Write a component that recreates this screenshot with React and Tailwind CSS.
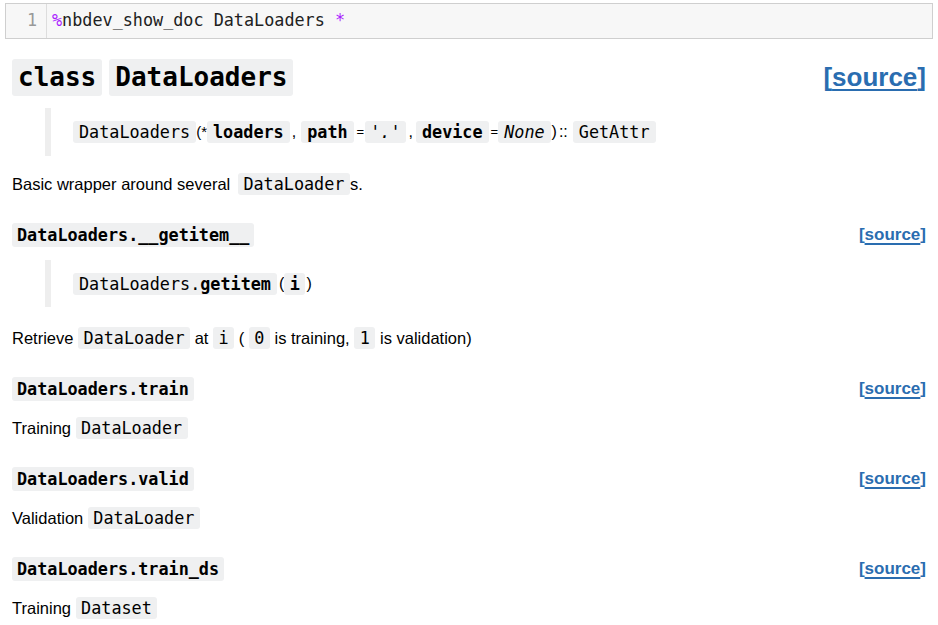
import React from "react";

const mono = { fontFamily: '"DejaVu Sans Mono", "Liberation Mono", monospace' };

function C({ children, b, i, cls = "" }) {
  return (
    <span
      className={`inline-block bg-[#eff0f1] rounded-[3px] leading-[22px] text-[16.8px] ${b ? "font-bold" : ""} ${i ? "italic" : ""} ${cls || "px-[5.5px]"}`}
      style={mono}
    >
      {children}
    </span>
  );
}

function Src({ big }) {
  return (
    <a
      className={`font-bold text-[#2a6db0] ${big ? "text-[26px] leading-[37px]" : "text-[17px] leading-[24px]"}`}
    >
      [<span className="underline decoration-[2px] underline-offset-[3px]">source</span>]
    </a>
  );
}

function SubHead({ name, mt }) {
  return (
    <div className={`flex items-center justify-between h-[24px] ${mt}`}>
      <span
        className="inline-block bg-[#eff0f1] rounded-[3px] px-[5px] leading-[24px] text-[16.8px] font-bold text-black"
        style={mono}
      >
        {name}
      </span>
      <Src />
    </div>
  );
}

export default function App() {
  return (
    <div
      className="w-[938px] h-[625px] bg-white overflow-hidden text-black"
      style={{ fontFamily: '"Liberation Sans", Arial, sans-serif' }}
    >
      <div className="mx-[5px] mt-[3px] h-[36px] border border-[#cfcfcf] bg-[#f7f7f7] flex items-center">
        <div
          className="w-[41px] h-full border-r border-[#dddddd] text-right pr-[9px] text-[#999999] text-[16.8px] flex items-center justify-end"
          style={mono}
        >
          1
        </div>
        <div className="pl-[5px] text-[16.8px] text-[#212121]" style={mono}>
          <span className="text-[#aa22ff]">%</span>nbdev_show_doc DataLoaders{" "}
          <span className="text-[#aa22ff]">*</span>
        </div>
      </div>

      <div className="px-[12px]">
        <div className="mt-[20px] flex items-center justify-between h-[37px]">
          <div className="flex gap-[7px]">
            <span
              className="bg-[#eff0f1] rounded-[3px] px-[6px] leading-[37px] text-[26px] font-bold"
              style={mono}
            >
              class
            </span>
            <span
              className="bg-[#eff0f1] rounded-[3px] px-[6px] leading-[37px] text-[26px] font-bold"
              style={mono}
            >
              DataLoaders
            </span>
          </div>
          <Src big />
        </div>

        <div className="mt-[12px] ml-[33px] h-[48px] border-l-[6px] border-[#eeeeee] pl-[22px] flex items-center text-[16px]">
          <C cls="px-[6px]">DataLoaders</C>
          <span className="text-[15px]">(*</span>
          <C b cls="px-[6px]">loaders</C>
          <span className="ml-[2px] mr-[5px]">,</span>
          <C b cls="px-[6px]">path</C>
          <span className="ml-[3px] mr-[1px] text-[13px]">=</span>
          <C i cls="px-[5px]">'.'</C>
          <span className="ml-[3px] mr-[3px]">,</span>
          <C b cls="px-[6px]">device</C>
          <span className="ml-[2px] text-[13px]">=</span>
          <C i cls="px-[6px]">None</C>
          <span className="ml-[1px]">)</span>
          <span className="ml-[2px] mr-[5px]">::</span>
          <C cls="px-[6px]">GetAttr</C>
        </div>

        <div className="mt-[17px] text-[16.5px] leading-[22px] flex items-center">
          <span>Basic wrapper around several&nbsp;</span>
          <C cls="ml-[3px] px-[5.5px]">DataLoader</C>
          <span>s.</span>
        </div>

        <SubHead name="DataLoaders.__getitem__" mt="mt-[28px]" />

        <div className="mt-[13px] ml-[33px] h-[47px] border-l-[6px] border-[#eeeeee] pl-[22px] flex items-center text-[16px]">
          <C cls="px-[6px]">
            DataLoaders.<span className="font-bold">getitem</span>
          </C>
          <span className="ml-[2px]">(</span>
          <C b cls="px-[5.5px]">i</C>
          <span className="ml-[1px]">)</span>
        </div>

        <div className="mt-[20px] text-[16.5px] leading-[22px] flex items-center whitespace-pre">
          <span>Retrieve </span>
          <C>DataLoader</C>
          <span> at </span>
          <C>i</C>
          <span> ( </span>
          <C>0</C>
          <span> is training, </span>
          <C>1</C>
          <span> is validation)</span>
        </div>

        <SubHead name="DataLoaders.train" mt="mt-[28px]" />
        <div className="mt-[16px] text-[16.5px] leading-[22px] flex items-center whitespace-pre">
          <span>Training </span>
          <C>DataLoader</C>
        </div>

        <SubHead name="DataLoaders.valid" mt="mt-[28px]" />
        <div className="mt-[16px] text-[16.5px] leading-[22px] flex items-center whitespace-pre">
          <span>Validation </span>
          <C>DataLoader</C>
        </div>

        <SubHead name="DataLoaders.train_ds" mt="mt-[28px]" />
        <div className="mt-[16px] text-[16.5px] leading-[22px] flex items-center whitespace-pre">
          <span>Training </span>
          <C>Dataset</C>
        </div>
      </div>
    </div>
  );
}
